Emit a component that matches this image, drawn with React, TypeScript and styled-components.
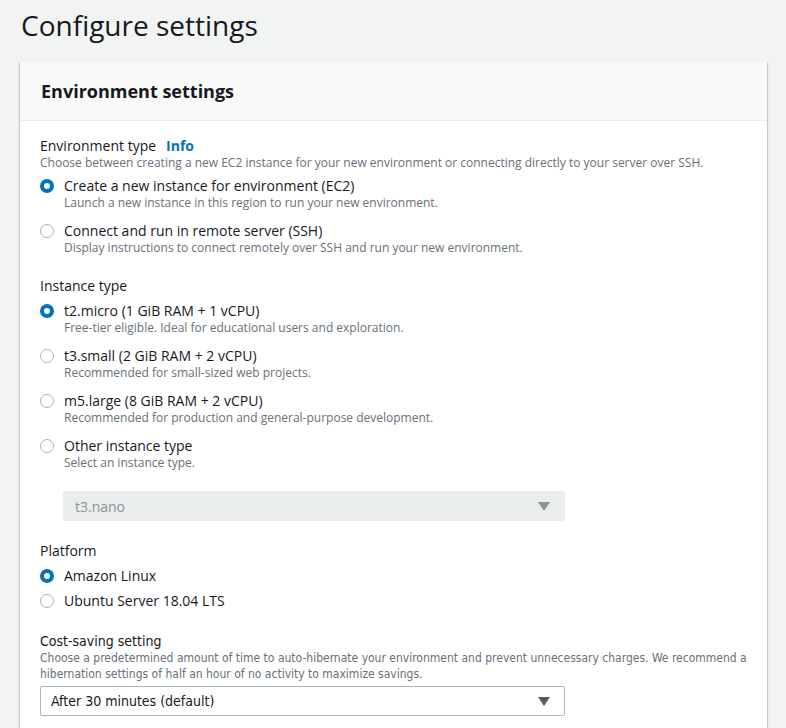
import React from "react";
import styled, { createGlobalStyle } from "styled-components";

const Global = createGlobalStyle`
  html, body { margin: 0; padding: 0; background: #f2f3f3; }
  body { font-family: "Open Sans", "Noto Sans", Arial, sans-serif; color: #16191f; }
  * { box-sizing: border-box; }
`;

const Page = styled.div`
  padding: 6px 0 0 20px;
  height: 728px;
  overflow: hidden;
`;

const Title = styled.h1`
  margin: 0 0 18px 1px;
  font-size: 28px;
  line-height: 38px;
  font-weight: 400;
  color: #16191f;
`;

const Card = styled.section`
  width: 747px;
  background: #fff;
  box-shadow: 0 1px 1px 0 rgba(0, 28, 36, 0.3), 1px 1px 1px 0 rgba(0, 28, 36, 0.15),
    -1px 1px 1px 0 rgba(0, 28, 36, 0.15);
`;

const CardHeader = styled.header`
  height: 59px;
  display: flex;
  align-items: center;
  padding: 0 20px 1px 21px;
  background: #fafafa;
  border-bottom: 1px solid #eaeded;
  font-size: 18px;
  font-weight: 700;
`;

const CardBody = styled.div`
  padding: 16px 20px 40px 20px;
  display: flex;
  flex-direction: column;
  gap: 21px;
`;

const Field = styled.div<{ $top?: number }>`
  display: flex;
  flex-direction: column;
  margin-top: ${(p) => p.$top || 0}px;
`;

const Label = styled.div`
  font-size: 14px;
  line-height: 18px;
  color: #16191f;
  display: flex;
  gap: 10px;
`;

const InfoLink = styled.a`
  color: #0073bb;
  font-weight: 700;
  text-decoration: none;
`;

const Description = styled.div`
  font-size: 12px;
  line-height: 16px;
  color: #687078;
`;

const RadioGroup = styled.div<{ $gap: number; $top: number }>`
  display: flex;
  flex-direction: column;
  gap: ${(p) => p.$gap}px;
  margin-top: ${(p) => p.$top}px;
`;

const Option = styled.label`
  display: grid;
  grid-template-columns: 14px 1fr;
  column-gap: 10px;
  align-items: start;
  cursor: pointer;
`;

const Circle = styled.span<{ $checked: boolean }>`
  width: 14px;
  height: 14px;
  margin-top: 2px;
  border-radius: 50%;
  background: #fff;
  border: ${(p) => (p.$checked ? "4px solid #0073bb" : "1px solid #aab7b8")};
`;

const OptionText = styled.div`
  display: flex;
  flex-direction: column;
`;

const SelectBox = styled.div<{ $disabled?: boolean; $indent?: number; $top?: number }>`
  margin-left: ${(p) => p.$indent || 0}px;
  margin-top: ${(p) => p.$top || 0}px;
  width: ${(p) => (p.$indent ? 502 : 525)}px;
  height: 30px;
  display: flex;
  align-items: center;
  justify-content: space-between;
  padding: 0 14px 0 ${(p) => (p.$disabled ? 11 : 10)}px;
  border-radius: 2px;
  font-size: 14px;
  background: ${(p) => (p.$disabled ? "#eaeded" : "#fff")};
  border: 1px solid ${(p) => (p.$disabled ? "#eaeded" : "#aab7b8")};
  color: ${(p) => (p.$disabled ? "#879596" : "#16191f")};
`;

const Caret = styled.svg<{ $color: string }>`
  width: 12px;
  height: 9px;
  fill: ${(p) => p.$color};
`;

const Narrow = styled.div`
  font-stretch: condensed;
  font-family: "DejaVu Sans", "Liberation Sans Narrow", sans-serif;
`;

type Opt = { label: string; desc?: string; checked?: boolean };

function Radios({ options, gap, top }: { options: Opt[]; gap: number; top: number }) {
  return (
    <RadioGroup $gap={gap} $top={top}>
      {options.map((o) => (
        <Option key={o.label}>
          <Circle $checked={!!o.checked} />
          <OptionText>
            <Label>{o.label}</Label>
            {o.desc && <Description>{o.desc}</Description>}
          </OptionText>
        </Option>
      ))}
    </RadioGroup>
  );
}

function Select({ value, disabled, indent, top }: { value: string; disabled?: boolean; indent?: number; top?: number }) {
  return (
    <SelectBox $disabled={disabled} $indent={indent} $top={top}>
      <span>{value}</span>
      <Caret $color={disabled ? "#879596" : "#545b64"} viewBox="0 0 12 9">
        <polygon points="0,0 12,0 6,9" />
      </Caret>
    </SelectBox>
  );
}

export default function App() {
  return (
    <Page>
      <Global />
      <Title>Configure settings</Title>
      <Card>
        <CardHeader>Environment settings</CardHeader>
        <CardBody>
          <Field>
            <Label>
              Environment type <InfoLink href="#">Info</InfoLink>
            </Label>
            <Description>
              Choose between creating a new EC2 instance for your new environment or connecting directly to your server over SSH.
            </Description>
            <Radios
              top={6}
              gap={11}
              options={[
                {
                  label: "Create a new instance for environment (EC2)",
                  desc: "Launch a new instance in this region to run your new environment.",
                  checked: true,
                },
                {
                  label: "Connect and run in remote server (SSH)",
                  desc: "Display instructions to connect remotely over SSH and run your new environment.",
                },
              ]}
            />
          </Field>
          <Field>
            <Label>Instance type</Label>
            <Radios
              top={7}
              gap={11}
              options={[
                { label: "t2.micro (1 GiB RAM + 1 vCPU)", desc: "Free-tier eligible. Ideal for educational users and exploration.", checked: true },
                { label: "t3.small (2 GiB RAM + 2 vCPU)", desc: "Recommended for small-sized web projects." },
                { label: "m5.large (8 GiB RAM + 2 vCPU)", desc: "Recommended for production and general-purpose development." },
                { label: "Other instance type", desc: "Select an instance type." },
              ]}
            />
          </Field>
          <Select value="t3.nano" disabled indent={23} top={-1} />
          <Field>
            <Label>Platform</Label>
            <Radios
              top={7}
              gap={7}
              options={[{ label: "Amazon Linux", checked: true }, { label: "Ubuntu Server 18.04 LTS" }]}
            />
          </Field>
          <Narrow>
            <Field $top={1}>
              <Label>Cost-saving setting</Label>
              <Description>
                Choose a predetermined amount of time to auto-hibernate your environment and prevent unnecessary charges. We recommend a hibernation settings of half an hour of no activity to maximize savings.
              </Description>
              <Select value="After 30 minutes (default)" top={4} />
            </Field>
          </Narrow>
        </CardBody>
      </Card>
    </Page>
  );
}
